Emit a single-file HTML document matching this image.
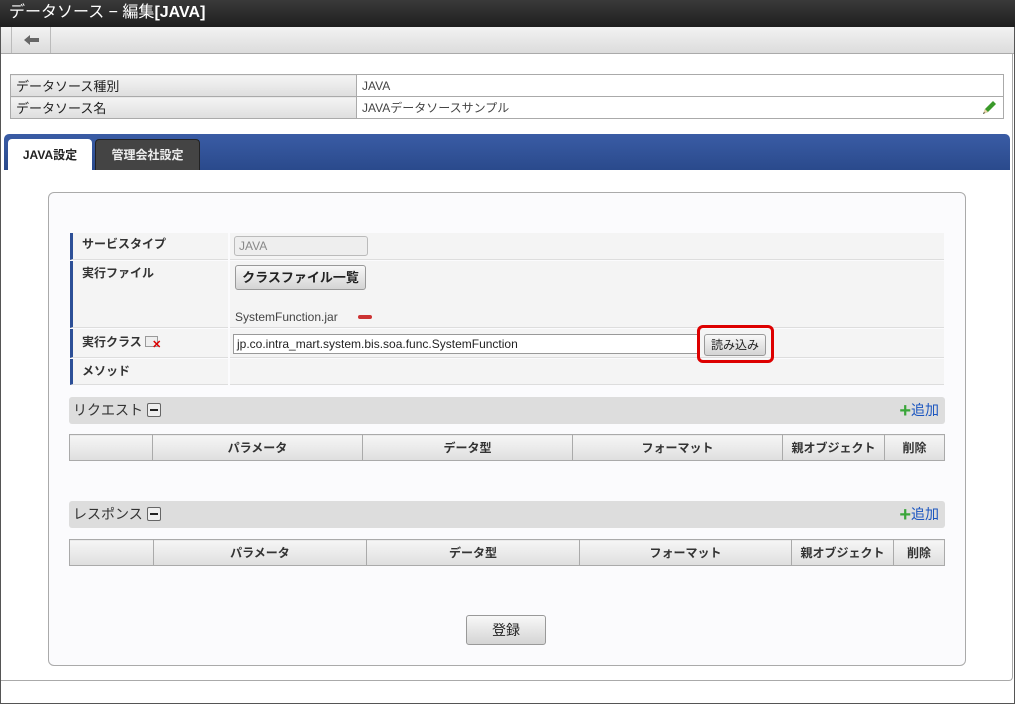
<!DOCTYPE html>
<html><head><meta charset="utf-8"><style>
*{box-sizing:border-box;margin:0;padding:0}
body{width:1015px;height:704px;background:#fff;font-family:"Liberation Sans","Noto Sans CJK JP",sans-serif;font-size:12px;color:#333;position:relative;overflow:hidden}
.a{position:absolute}
.frame{left:0;top:0;width:1015px;height:704px;border:1px solid #555;border-top:none}
.title{left:0;top:0;width:1015px;height:27px;background:linear-gradient(#3a3a3a,#1e1e1e);color:#fff;font-size:16px;line-height:26px;padding-left:9px}
.tool{left:1px;top:27px;width:1013px;height:27px;background:linear-gradient(#f2f2f2,#dcdcdc);border-bottom:1px solid #aaa}
.back{left:10px;top:0;width:40px;height:26px;border-left:1px solid #bbb;border-right:1px solid #bbb}
.inner{left:1px;top:54px;width:1012px;height:627px;border-right:1px solid #aaa;border-bottom:1px solid #aaa;border-radius:0 0 4px 0}
table{border-collapse:collapse}
.info{left:10px;top:74px;width:994px}
.info td{border:1px solid #aaa;height:22px;padding-left:5px}
.info td.l{background:linear-gradient(#f4f4f4,#dedede);width:346px;font-size:13px;color:#222}
.info td.v{font-size:12px;color:#444}
.tabbar{left:4px;top:134px;width:1006px;height:36px;background:linear-gradient(#3a5ca5,#2a4a8c);border-radius:5px 5px 0 0}
.tab1{left:8px;top:139px;width:84px;height:31px;background:#fff;border-radius:4px 4px 0 0;font-size:12px;font-weight:bold;text-align:center;line-height:32px;color:#222}
.tab2{left:95px;top:139px;width:105px;height:31px;background:#444;border:1px solid #222;border-bottom:none;border-radius:4px 4px 0 0;font-size:12px;font-weight:bold;text-align:center;line-height:31px;color:#eee}
.panel{left:48px;top:192px;width:918px;height:474px;border:1px solid #aaa;border-radius:6px;background:#fbfbfd}
.lab{left:70px;width:158px;background:#f4f4f4;border-left:3px solid #2c4f97;border-bottom:1px solid #ddd;padding-left:9px;font-weight:bold;font-size:12px;line-height:20px;color:#333}
.val{left:230px;width:714px;background:#f4f4f4;border-bottom:1px solid #ddd}
.btn{background:linear-gradient(#f8f8f8,#d4d4d4);border:1px solid #999;border-radius:3px;text-align:center;color:#222}
.sec{left:69px;width:876px;height:27px;background:#ddd;border-radius:3px;font-size:14px;line-height:27px;padding-left:4px;color:#333}
.minus{display:inline-block;width:14px;height:14px;border:1px solid #666;border-radius:2px;background:#eee;vertical-align:-2px;margin-left:4px;position:relative}
.minus:after{content:"";position:absolute;left:2px;top:5px;width:8px;height:2px;background:#222}
.add{position:absolute;right:6px;top:0;color:#1a55c0;font-size:14px}
.add b{color:#3aa63a;font-size:20px;font-weight:bold;vertical-align:-2px}
.grid{left:69px;width:876px}
.grid td{border:1px solid #aaa;background:linear-gradient(#f6f6f6,#dedede);height:26px;text-align:center;font-weight:bold;font-size:12px;color:#333}
</style></head><body>
<div class="a frame"></div>
<div class="a title">データソース − 編集<b>[JAVA]</b></div>
<div class="a tool"><div class="a back"><svg width="40" height="26"><path d="M12 13 L18 8 L18 11 L27 11 L27 15 L18 15 L18 18 Z" fill="#666"/></svg></div></div>
<div class="a inner"></div>
<table class="a info"><tr><td class="l">データソース種別</td><td class="v">JAVA</td></tr><tr><td class="l">データソース名</td><td class="v" style="position:relative">JAVAデータソースサンプル<svg style="position:absolute;right:6px;top:3px" width="16" height="16"><path d="M2 14 L4 9 L12 1 L15 4 L7 12 Z" fill="#3a9a2a"/><path d="M2 14 L4 9 L7 12 Z" fill="#e8d2a8"/><path d="M2 14 L3 12 L4 13Z" fill="#333"/></svg></td></tr></table>
<div class="a tabbar"></div>
<div class="a tab1">JAVA設定</div>
<div class="a tab2">管理会社設定</div>
<div class="a panel"></div>

<div class="a lab" style="top:233px;height:27px;line-height:22px">サービスタイプ</div>
<div class="a val" style="top:233px;height:27px"></div>
<div class="a" style="left:234px;top:236px;width:134px;height:20px;border:1px solid #bbb;border-radius:3px;background:#eee;color:#888;padding-left:4px;line-height:18px">JAVA</div>

<div class="a lab" style="top:261px;height:67px;line-height:24px">実行ファイル</div>
<div class="a val" style="top:261px;height:67px"></div>
<div class="a btn" style="left:235px;top:265px;width:131px;height:25px;font-size:13px;font-weight:bold;line-height:23px">クラスファイル一覧</div>
<div class="a" style="left:235px;top:310px;color:#444">SystemFunction.jar</div>
<div class="a" style="left:358px;top:315px;width:14px;height:4px;background:#c33;border-radius:2px"></div>

<div class="a lab" style="top:329px;height:29px;line-height:26px">実行クラス <span style="display:inline-block;width:13px;height:11px;border:1px solid #999;background:#eee;vertical-align:-1px;position:relative"><span style="position:absolute;left:6px;top:3px;color:#d00;font-size:11px;line-height:10px">✕</span></span></div>
<div class="a val" style="top:329px;height:29px"></div>
<div class="a" style="left:233px;top:334px;width:465px;height:20px;border:1px solid #999;background:#fff;padding-left:3px;line-height:19px;color:#222">jp.co.intra_mart.system.bis.soa.func.SystemFunction</div>

<div class="a lab" style="top:359px;height:26px;line-height:24px">メソッド</div>
<div class="a val" style="top:359px;height:26px"></div>

<div class="a" style="left:697px;top:325px;width:77px;height:38px;border:3px solid #d00;border-radius:6px"></div>
<div class="a btn" style="left:704px;top:334px;width:62px;height:22px;line-height:20px;font-size:12px">読み込み</div>

<div class="a sec" style="top:397px">リクエスト<span class="minus"></span><span class="add"><b>+</b>追加</span></div>
<table class="a grid" style="top:434px"><tr><td style="width:83px"></td><td style="width:210px">パラメータ</td><td style="width:210px">データ型</td><td style="width:210px">フォーマット</td><td style="width:102px">親オブジェクト</td><td>削除</td></tr></table>

<div class="a sec" style="top:501px">レスポンス<span class="minus"></span><span class="add"><b>+</b>追加</span></div>
<table class="a grid" style="top:539px"><tr><td style="width:84px;height:25px"></td><td style="width:213px">パラメータ</td><td style="width:213px">データ型</td><td style="width:212px">フォーマット</td><td style="width:102px">親オブジェクト</td><td>削除</td></tr></table>

<div class="a btn" style="left:466px;top:615px;width:80px;height:30px;line-height:28px;font-size:14px">登録</div>
</body></html>
